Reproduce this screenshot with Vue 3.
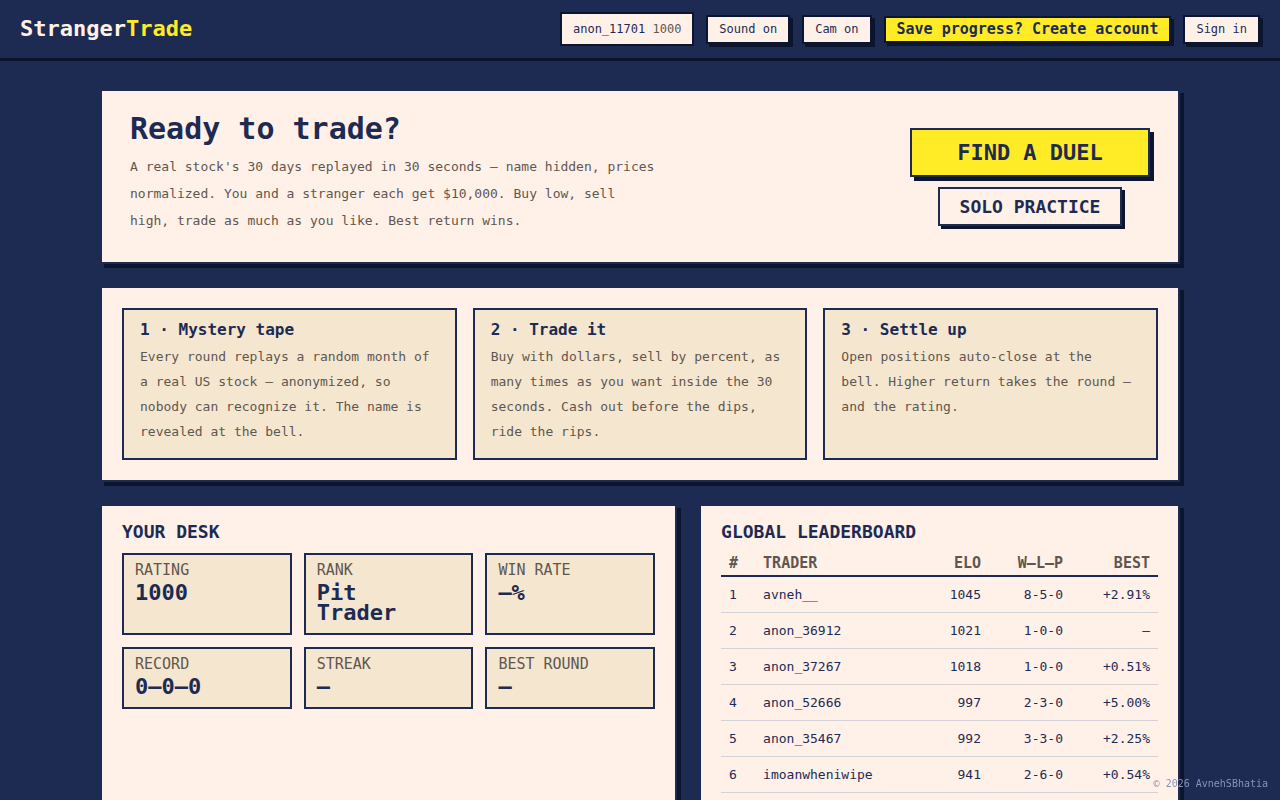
<script setup>
const steps = [
  { title: '1 · Mystery tape', text: 'Every round replays a random month of a real US stock — anonymized, so nobody can recognize it. The name is revealed at the bell.' },
  { title: '2 · Trade it', text: 'Buy with dollars, sell by percent, as many times as you want inside the 30 seconds. Cash out before the dips, ride the rips.' },
  { title: '3 · Settle up', text: 'Open positions auto-close at the bell. Higher return takes the round — and the rating.' },
]

const stats = [
  { label: 'RATING', lines: ['1000'] },
  { label: 'RANK', lines: ['Pit', 'Trader'] },
  { label: 'WIN RATE', lines: ['—%'] },
  { label: 'RECORD', lines: ['0—0—0'] },
  { label: 'STREAK', lines: ['—'] },
  { label: 'BEST ROUND', lines: ['—'] },
]

const traders = [
  { name: 'avneh__', elo: 1045, wlp: '8-5-0', best: '+2.91%' },
  { name: 'anon_36912', elo: 1021, wlp: '1-0-0', best: '–' },
  { name: 'anon_37267', elo: 1018, wlp: '1-0-0', best: '+0.51%' },
  { name: 'anon_52666', elo: 997, wlp: '2-3-0', best: '+5.00%' },
  { name: 'anon_35467', elo: 992, wlp: '3-3-0', best: '+2.25%' },
  { name: 'imoanwheniwipe', elo: 941, wlp: '2-6-0', best: '+0.54%' },
]
</script>

<template>
  <div class="page">
    <header class="topbar">
      <a class="logo" href="#">Stranger<span class="logo-accent">Trade</span></a>
      <nav class="actions">
        <span class="chip">anon_11701 <span class="chip-elo">1000</span></span>
        <button class="btn small" type="button">Sound on</button>
        <button class="btn small" type="button">Cam on</button>
        <button class="btn save" type="button">Save progress? Create account</button>
        <button class="btn small" type="button">Sign in</button>
      </nav>
    </header>

    <main class="content">
      <section class="panel hero">
        <div class="hero-copy">
          <h1>Ready to trade?</h1>
          <p>A real stock's 30 days replayed in 30 seconds — name hidden, prices normalized. You and a stranger each get $10,000. Buy low, sell high, trade as much as you like. Best return wins.</p>
        </div>
        <div class="hero-actions">
          <button class="btn duel" type="button">FIND A DUEL</button>
          <button class="btn solo" type="button">SOLO PRACTICE</button>
        </div>
      </section>

      <section class="panel steps">
        <article v-for="step in steps" :key="step.title" class="step">
          <h3>{{ step.title }}</h3>
          <p>{{ step.text }}</p>
        </article>
      </section>

      <div class="columns">
        <section class="panel">
          <h2>YOUR DESK</h2>
          <dl class="stats">
            <div v-for="stat in stats" :key="stat.label" class="stat">
              <dt>{{ stat.label }}</dt>
              <dd><span v-for="line in stat.lines" :key="line">{{ line }}</span></dd>
            </div>
          </dl>
        </section>

        <section class="panel leaderboard">
          <h2>GLOBAL LEADERBOARD</h2>
          <table>
            <thead>
              <tr>
                <th class="col-pos">#</th>
                <th>TRADER</th>
                <th class="col-elo num">ELO</th>
                <th class="col-wlp num">W—L—P</th>
                <th class="col-best num">BEST</th>
              </tr>
            </thead>
            <tbody>
              <tr v-for="(trader, i) in traders" :key="trader.name">
                <td>{{ i + 1 }}</td>
                <td>{{ trader.name }}</td>
                <td class="num">{{ trader.elo }}</td>
                <td class="num">{{ trader.wlp }}</td>
                <td class="num">{{ trader.best }}</td>
              </tr>
            </tbody>
          </table>
        </section>
      </div>
    </main>

    <footer class="credit">© 2026 AvnehSBhatia</footer>
  </div>
</template>

<style>
body {
  margin: 0;
  background: #1d2b53;
}
</style>

<style scoped>
.page {
  min-height: 100vh;
  color: #1d2b53;
  background: #1d2b53;
  font: 13px/20px "DejaVu Sans Mono", "Liberation Mono", monospace;
}
.page *,
.page {
  box-sizing: border-box;
}
h1, h2, h3, p, dl, dd {
  margin: 0;
}

.topbar {
  display: flex;
  align-items: center;
  justify-content: space-between;
  padding: 12px 20px;
  border-bottom: 3px solid #0c1530;
}
.logo {
  color: #fff1e8;
  font-size: 22px;
  line-height: 24px;
  font-weight: 700;
  text-decoration: none;
}
.logo-accent {
  color: #ffec27;
}
.actions {
  display: flex;
  align-items: center;
  gap: 12px;
}
.chip {
  padding: 6px 11px;
  border: 2px solid #0c1530;
  background: #fff1e8;
  font-size: 12px;
  line-height: 18px;
}
.chip-elo {
  color: #5f574f;
}

.btn {
  margin: 0;
  border: 2px solid #1d2b53;
  border-radius: 0;
  background: #fff1e8;
  color: #1d2b53;
  font-family: inherit;
  white-space: nowrap;
  cursor: pointer;
}
.small,
.save {
  padding: 4px 11px;
  border-color: #0c1530;
  box-shadow: 3px 3px 0 #0c1530;
}
.small {
  font-size: 12px;
  line-height: 17px;
}
.save {
  background: #ffec27;
  font-size: 15px;
  font-weight: 700;
  line-height: 15px;
}

.content {
  display: flex;
  flex-direction: column;
  gap: 22px;
  max-width: 1080px;
  margin: 0 auto;
  padding: 28px 0 40px;
}
.panel {
  padding: 20px;
  border: 2px solid #1d2b53;
  background: #fff1e8;
  box-shadow: 4px 4px 0 #0c1530;
}

.hero {
  display: flex;
  align-items: center;
  justify-content: space-between;
  gap: 28px;
  padding: 28px;
}
.hero h1 {
  margin-bottom: 14px;
  font-size: 30px;
  line-height: 20px;
  font-weight: 700;
}
.hero p {
  max-width: 528px;
  color: #5f574f;
  line-height: 27px;
}
.hero-actions {
  display: flex;
  flex-direction: column;
  align-items: center;
  gap: 10px;
}
.duel {
  min-width: 240px;
  padding: 12px 28px;
  background: #ffec27;
  box-shadow: 4px 4px 0 #0c1530;
  font-size: 22px;
  font-weight: 700;
  line-height: 21px;
}
.solo {
  padding: 9px 20px;
  box-shadow: 3px 3px 0 #0c1530;
  font-size: 18px;
  font-weight: 700;
  line-height: 17px;
}

.steps {
  display: grid;
  grid-template-columns: repeat(3, 1fr);
  gap: 16px;
}
.step {
  padding: 14px 18px 14px 16px;
  border: 2px solid #1d2b53;
  background: #f5e6d0;
}
.step h3 {
  margin-bottom: 8px;
  font-size: 16px;
  line-height: 12px;
  font-weight: 700;
}
.step p {
  color: #5f574f;
  line-height: 25px;
}

.columns {
  display: grid;
  grid-template-columns: 6fr 5fr;
  gap: 22px;
}
h2 {
  margin-bottom: 15px;
  font-size: 18px;
  line-height: 12px;
  font-weight: 700;
}
.stats {
  display: grid;
  grid-template-columns: repeat(3, 1fr);
  gap: 12px;
}
.stat {
  padding: 10px 11px;
  border: 2px solid #1d2b53;
  background: #f5e6d0;
}
.stat dt {
  margin-bottom: 8px;
  color: #5f574f;
  font-size: 15px;
  line-height: 10px;
}
.stat dd {
  font-size: 22px;
  font-weight: 700;
  line-height: 20px;
}
.stat dd span {
  display: block;
}

.leaderboard {
  padding-bottom: 40px;
}
table {
  width: 100%;
  table-layout: fixed;
  border-collapse: collapse;
}
th,
td {
  padding: 8px;
  text-align: left;
  line-height: 19px;
  border-bottom: 1px solid #d3d1d8;
}
th {
  padding: 2px 8px 4px;
  color: #5f574f;
  font-size: 15px;
  line-height: 16px;
  border-bottom: 2px solid #1d2b53;
}
.num {
  text-align: right;
}
.col-pos {
  width: 34px;
}
.col-elo {
  width: 70px;
}
.col-wlp {
  width: 82px;
}
.col-best {
  width: 87px;
}

.credit {
  position: fixed;
  right: 12px;
  bottom: 7px;
  color: #8a90b4;
  font-size: 10px;
  line-height: 18px;
}
</style>
